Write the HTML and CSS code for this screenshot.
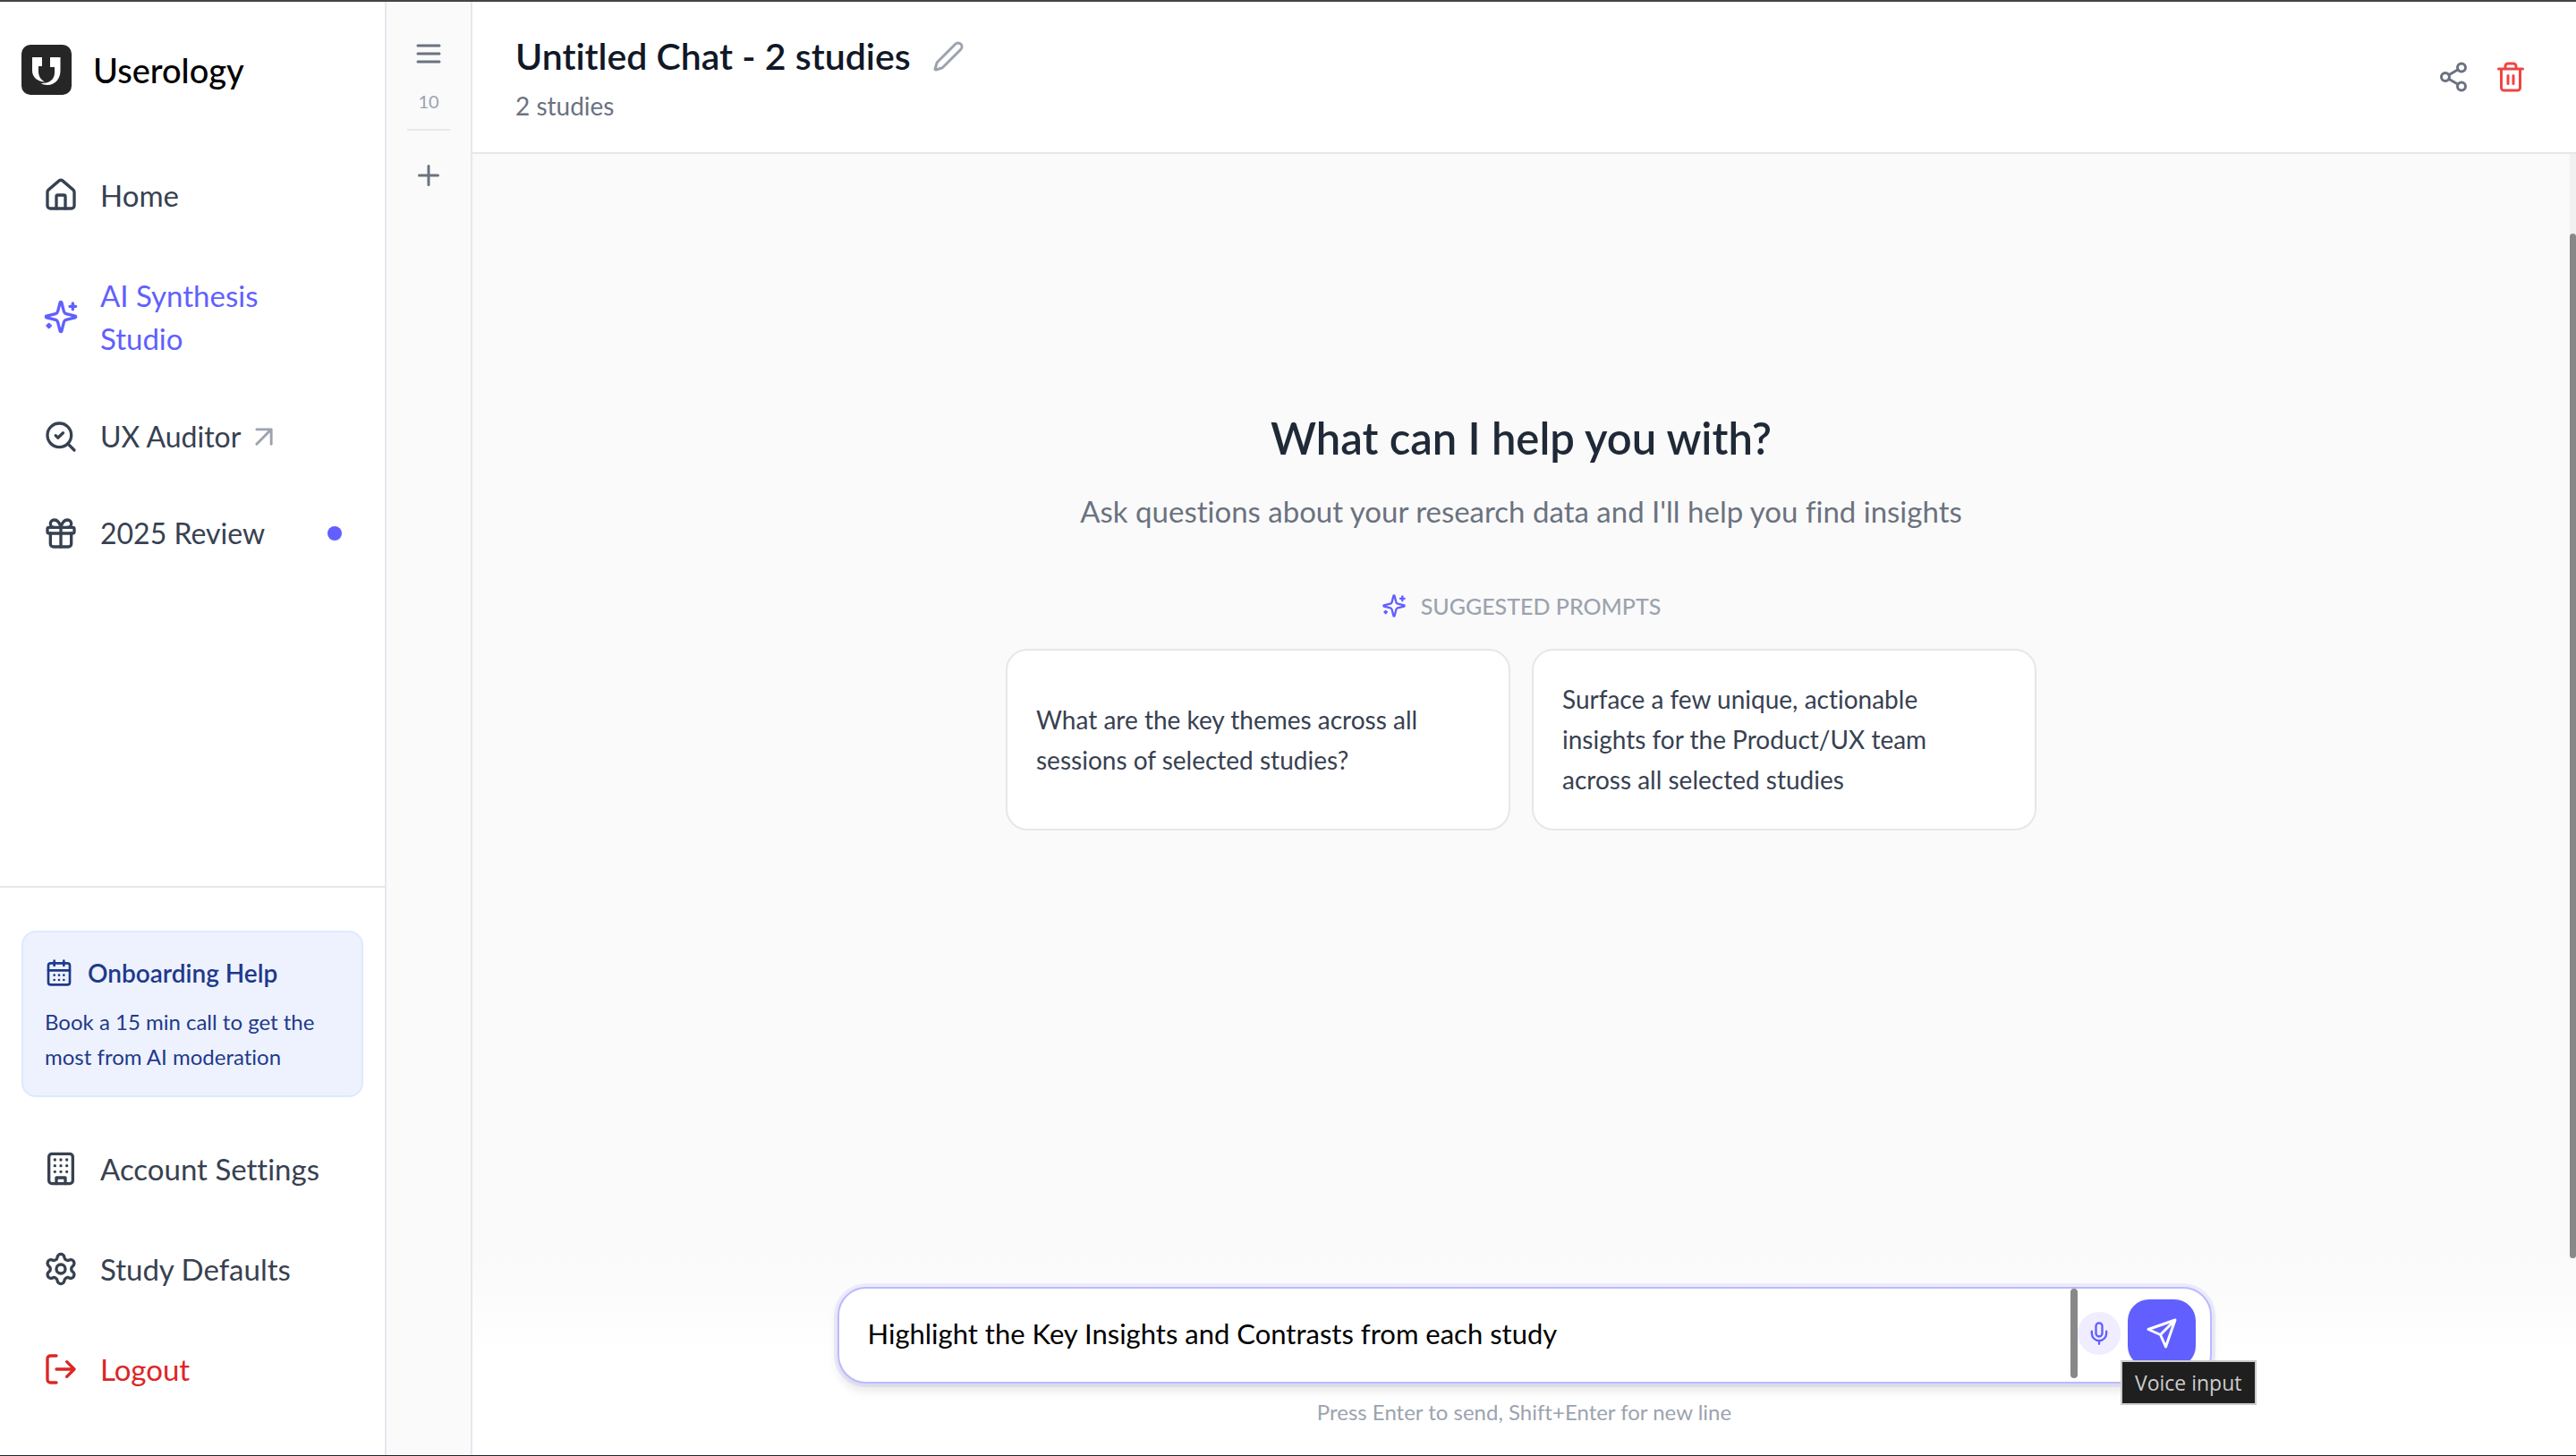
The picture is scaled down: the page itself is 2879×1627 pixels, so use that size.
FILE: index.html
```html
<!DOCTYPE html>
<html lang="en">
<head>
    <meta charset="UTF-8">
    <meta name="viewport" content="width=device-width, initial-scale=1.0">
    <title>Userology</title>
    <link rel="stylesheet" href="styles.css">
</head>
<body>
    <div class="app">
        <aside class="sidebar">
            <a href="#" class="brand">
                <svg class="logo" viewBox="0 0 56 56">
                    <rect width="56" height="56" rx="10" fill="#262626"/>
                    <path fill="#fff" d="M12 14h11v10h-4v6c0 5 2.5 9 7 11.500C18 41 12 36.500 12 29z"/>
                    <path fill="#fff" d="M32 14h11.500v15c0 9-6 16-14.500 16-3 0-5.500-.8-7.500-2C31 43.500 37 39 37 31v-6h-5z"/>
                </svg>
                <span>Userology</span>
            </a>
            <nav class="menu">
                <a href="#" class="item">
                    <svg class="icon" viewBox="0 0 24 24"><path d="M15 21v-8a1 1 0 0 0-1-1h-4a1 1 0 0 0-1 1v8"/><path d="M3 10a2 2 0 0 1 .709-1.528l7-5.999a2 2 0 0 1 2.582 0l7 5.999A2 2 0 0 1 21 10v9a2 2 0 0 1-2 2H5a2 2 0 0 1-2-2z"/></svg>
                    <span>Home</span>
                </a>
                <a href="#" class="item active">
                    <svg class="icon" viewBox="0 0 24 24"><path d="M9.937 15.5A2 2 0 0 0 8.5 14.063l-6.135-1.582a.5.5 0 0 1 0-.962L8.5 9.936A2 2 0 0 0 9.937 8.5l1.582-6.135a.5.5 0 0 1 .963 0L14.063 8.5A2 2 0 0 0 15.5 9.937l6.135 1.581a.5.5 0 0 1 0 .964L15.5 14.063a2 2 0 0 0-1.437 1.437l-1.582 6.135a.5.5 0 0 1-.963 0z"/><path d="M20 3v4M22 5h-4M4 17v2M5 18H3"/></svg>
                    <span>AI Synthesis Studio</span>
                </a>
                <a href="#" class="item short">
                    <svg class="icon" viewBox="0 0 24 24"><circle cx="11" cy="11" r="8"/><path d="m21 21-4.3-4.3"/><path d="m8.5 11.2 1.5 1.5 3.5-3.2"/></svg>
                    <span>UX Auditor</span>
                    <svg class="icon external" viewBox="0 0 24 24"><path d="m5 19 14-14m0 0H5m14 0v14"/></svg>
                </a>
                <a href="#" class="item short">
                    <svg class="icon" viewBox="0 0 24 24"><rect x="3" y="8" width="18" height="4" rx="1"/><path d="M12 8v13"/><path d="M19 12v7a2 2 0 0 1-2 2H7a2 2 0 0 1-2-2v-7"/><path d="M7.5 8a2.5 2.5 0 0 1 0-5A4.8 8 0 0 1 12 8a4.8 8 0 0 1 4.5-5 2.5 2.5 0 0 1 0 5"/></svg>
                    <span>2025 Review</span>
                    <i class="dot"></i>
                </a>
            </nav>
            <div class="bottom">
                <a href="#" class="help">
                    <span class="help-title">
                        <svg class="icon" viewBox="0 0 24 24"><path d="M8 2v4M16 2v4"/><rect x="3" y="4" width="18" height="18" rx="2"/><path d="M3 10h18M8 14h.01M12 14h.01M16 14h.01M8 18h.01M12 18h.01M16 18h.01"/></svg>
                        Onboarding Help
                    </span>
                    <span class="help-text">Book a 15 min call to get the most from AI moderation</span>
                </a>
                <a href="#" class="item">
                    <svg class="icon" viewBox="0 0 24 24"><rect x="4" y="2" width="16" height="20" rx="2"/><path d="M9 22v-4h6v4M8 6h.01M12 6h.01M16 6h.01M8 10h.01M12 10h.01M16 10h.01M8 14h.01M12 14h.01M16 14h.01"/></svg>
                    <span>Account Settings</span>
                </a>
                <a href="#" class="item">
                    <svg class="icon" viewBox="0 0 24 24"><path d="M9.671 4.136a2.34 2.34 0 0 1 4.659 0 2.34 2.34 0 0 0 3.319 1.915 2.34 2.34 0 0 1 2.33 4.033 2.34 2.34 0 0 0 0 3.831 2.34 2.34 0 0 1-2.33 4.033 2.34 2.34 0 0 0-3.319 1.915 2.34 2.34 0 0 1-4.659 0 2.34 2.34 0 0 0-3.32-1.915 2.34 2.34 0 0 1-2.33-4.033 2.34 2.34 0 0 0 0-3.831A2.34 2.34 0 0 1 6.35 6.051a2.34 2.34 0 0 0 3.319-1.915"/><circle cx="12" cy="12" r="3"/></svg>
                    <span>Study Defaults</span>
                </a>
                <a href="#" class="item logout">
                    <svg class="icon" viewBox="0 0 24 24"><path d="m16 17 5-5-5-5M21 12H9M9 21H5a2 2 0 0 1-2-2V5a2 2 0 0 1 2-2h4"/></svg>
                    <span>Logout</span>
                </a>
            </div>
        </aside>

        <div class="rail">
            <button class="rail-btn" aria-label="Open chats">
                <svg class="icon small" viewBox="0 0 24 24"><path d="M4 6h16M4 12h16M4 18h16"/></svg>
            </button>
            <span class="count">10</span>
            <hr>
            <button class="rail-btn" aria-label="New chat">
                <svg class="icon small" viewBox="0 0 24 24"><path d="M5 12h14M12 5v14"/></svg>
            </button>
        </div>

        <main class="main">
            <header class="header">
                <div>
                    <div class="title-row">
                        <h1>Untitled Chat - 2 studies</h1>
                        <button class="edit" aria-label="Rename">
                            <svg class="icon small" viewBox="0 0 24 24"><path d="M21.174 6.812a1 1 0 0 0-3.986-3.987L3.842 16.174a2 2 0 0 0-.5.83l-1.321 4.352a.5.5 0 0 0 .623.622l4.353-1.32a2 2 0 0 0 .83-.497z"/></svg>
                        </button>
                    </div>
                    <p class="subtitle">2 studies</p>
                </div>
                <div class="actions">
                    <button aria-label="Share">
                        <svg class="icon small" viewBox="0 0 24 24"><circle cx="18" cy="5" r="3"/><circle cx="6" cy="12" r="3"/><circle cx="18" cy="19" r="3"/><path d="m8.59 13.51 6.83 3.98M15.41 6.51l-6.82 3.98"/></svg>
                    </button>
                    <button class="delete" aria-label="Delete">
                        <svg class="icon small" viewBox="0 0 24 24"><path d="M3 6h18M19 6v14a2 2 0 0 1-2 2H7a2 2 0 0 1-2-2V6M8 6V4a2 2 0 0 1 2-2h4a2 2 0 0 1 2 2v2M10 11v6M14 11v6"/></svg>
                    </button>
                </div>
            </header>

            <div class="content">
                <section class="welcome">
                    <h2>What can I help you with?</h2>
                    <p class="lead">Ask questions about your research data and I'll help you find insights</p>
                    <div class="suggested">
                        <svg class="icon" viewBox="0 0 24 24"><path d="M9.937 15.5A2 2 0 0 0 8.5 14.063l-6.135-1.582a.5.5 0 0 1 0-.962L8.5 9.936A2 2 0 0 0 9.937 8.5l1.582-6.135a.5.5 0 0 1 .963 0L14.063 8.5A2 2 0 0 0 15.5 9.937l6.135 1.581a.5.5 0 0 1 0 .964L15.5 14.063a2 2 0 0 0-1.437 1.437l-1.582 6.135a.5.5 0 0 1-.963 0z"/><path d="M20 3v4M22 5h-4M4 17v2M5 18H3"/></svg>
                        <span>SUGGESTED PROMPTS</span>
                    </div>
                    <div class="prompts">
                        <button>What are the key themes across all sessions of selected studies?</button>
                        <button>Surface a few unique, actionable insights for the Product/UX team across all selected studies</button>
                    </div>
                </section>
                <div class="track"><div class="thumb"></div></div>
            </div>

            <footer class="composer">
                <form class="input-box">
                    <textarea rows="1" aria-label="Message">Highlight the Key Insights and Contrasts from each study</textarea>
                    <div class="thumb"></div>
                    <button type="button" class="mic" aria-label="Voice input">
                        <svg class="icon" viewBox="0 0 24 24"><path d="M12 19v3M19 10v2a7 7 0 0 1-14 0v-2"/><rect x="9" y="2" width="6" height="13" rx="3"/></svg>
                    </button>
                    <button type="button" class="send" aria-label="Send">
                        <svg class="icon small" viewBox="0 0 24 24"><path d="m22 2-7 20-4-9-9-4ZM22 2 11 13"/></svg>
                    </button>
                    <div class="tooltip" role="tooltip">Voice input</div>
                </form>
                <p class="hint">Press Enter to send, Shift+Enter for new line</p>
            </footer>
        </main>
    </div>
</body>
</html>
```
FILE: styles.css
```css
*{
    box-sizing: border-box;
}
body{
    margin: 0;
    font-family: Lato, "Liberation Sans", sans-serif;
    font-size: 33px;
    font-variant-ligatures: none;
    color: #374151;
}
h1, h2, p{
    margin: 0;
}
a{
    color: inherit;
    text-decoration: none;
}
button{
    padding: 0;
    border: 0;
    background: none;
    font: inherit;
    font-variant-ligatures: none;
    color: inherit;
    cursor: pointer;
}
.app{
    display: flex;
    height: 100vh;
    border-top: 2px solid #444;
    border-bottom: 1px solid #1f2430;
}
.icon{
    display: block;
    flex: none;
    width: 40px;
    height: 40px;
    fill: none;
    stroke: currentColor;
    stroke-width: 2;
    stroke-linecap: round;
    stroke-linejoin: round;
}
.icon.small{
    width: 36px;
    height: 36px;
}

/* sidebar */
.sidebar{
    display: flex;
    flex-direction: column;
    flex: none;
    width: 432px;
    border-right: 2px solid #e5e7eb;
    background-color: #fff;
}
.brand{
    display: flex;
    align-items: center;
    gap: 24px;
    padding: 48px 24px;
    font-size: 38px;
    font-weight: 500;
    line-height: 56px;
    color: #000;
}
.logo{
    width: 56px;
    height: 56px;
}
.menu{
    display: flex;
    flex-direction: column;
    gap: 16px;
    padding: 16px 24px;
}
.item{
    display: flex;
    align-items: center;
    gap: 24px;
    padding: 24px;
    line-height: 48px;
}
.item.short{
    font-size: 32px;
    line-height: 44px;
}
.item.active{
    color: #615fff;
}
.item.logout{
    color: #dc2626;
}
.item .external{
    width: 28px;
    height: 28px;
    margin-left: -12px;
    stroke-width: 2.5;
    color: #9ca3af;
}
.dot{
    width: 16px;
    height: 16px;
    margin-left: auto;
    border-radius: 50%;
    background-color: #615fff;
}
.bottom{
    display: flex;
    flex-direction: column;
    gap: 16px;
    margin-top: auto;
    padding: 48px 24px;
    border-top: 2px solid #e5e7eb;
}
.help{
    display: flex;
    flex-direction: column;
    gap: 14px;
    margin-bottom: 16px;
    padding: 24px;
    border: 2px solid #dbeafe;
    border-radius: 16px;
    background-color: #eef2ff;
    color: #1e3a8a;
}
.help-title{
    display: flex;
    align-items: center;
    gap: 16px;
    font-size: 28px;
    font-weight: 600;
    line-height: 42px;
}
.help-title .icon{
    width: 32px;
    height: 32px;
}
.help-text{
    font-size: 24px;
    line-height: 39px;
}

/* collapsed chat list */
.rail{
    display: flex;
    flex-direction: column;
    align-items: center;
    flex: none;
    width: 96px;
    padding-top: 28px;
    border-right: 2px solid #e5e7eb;
    background-color: #fafafa;
    color: #6b7280;
}
.rail-btn{
    padding: 12px;
}
.count{
    margin-top: 8px;
    font-size: 20px;
    line-height: 30px;
    color: #9ca3af;
}
.rail hr{
    width: 48px;
    margin: 16px 0 20px;
    border: 0;
    border-top: 2px solid #e5e7eb;
}

/* chat */
.main{
    display: flex;
    flex-direction: column;
    flex: 1;
    min-width: 0;
    background-color: #fafafa;
}
.header{
    display: flex;
    align-items: center;
    justify-content: space-between;
    padding: 31px 43px 31px 48px;
    border-bottom: 2px solid #e5e7eb;
    background-color: #fff;
}
.title-row{
    display: flex;
    align-items: center;
    gap: 24px;
}
.title-row h1{
    font-size: 41px;
    font-weight: 600;
    line-height: 60px;
    color: #111827;
}
.edit{
    color: #9ca3af;
}
.subtitle{
    margin-top: 4px;
    font-size: 28px;
    line-height: 42px;
    color: #6b7280;
}
.actions{
    display: flex;
    gap: 4px;
    color: #6b7280;
}
.actions button{
    padding: 12px;
}
.actions .delete{
    color: #ef4444;
}
.content{
    display: flex;
    flex: 1;
    min-height: 0;
}
.welcome{
    display: flex;
    flex-direction: column;
    align-items: center;
    flex: 1;
    padding-top: 285px;
}
.welcome h2{
    font-size: 49px;
    font-weight: 600;
    line-height: 64px;
    color: #1f2937;
}
.lead{
    margin-top: 24px;
    line-height: 52px;
    color: #6b7280;
}
.suggested{
    display: flex;
    align-items: center;
    gap: 16px;
    margin-top: 62px;
    font-size: 25px;
    font-weight: 500;
    line-height: 36px;
    color: #9ca3af;
}
.suggested .icon{
    width: 28px;
    height: 28px;
    color: #615fff;
}
.prompts{
    display: grid;
    grid-template-columns: 1fr 1fr;
    gap: 24px;
    width: 100%;
    max-width: 1152px;
    margin-top: 30px;
}
.prompts button{
    padding: 32px 48px 32px 32px;
    border: 2px solid #e5e7eb;
    border-radius: 24px;
    background-color: #fff;
    font-size: 28px;
    line-height: 45px;
    text-align: left;
}
.track{
    width: 7px;
    padding-top: 89px;
    background-color: #f1f1f1;
}
.thumb{
    height: 100%;
    border-radius: 4px;
    background-color: #888;
}

/* message box */
.composer{
    padding: 32px 48px 30px;
    background-image: linear-gradient(#fafafa, #fff 50%);
}
.input-box{
    position: relative;
    display: flex;
    align-items: center;
    max-width: 1536px;
    height: 108px;
    margin: 0 auto;
    padding: 0 16px 4px 0;
    border: 2px solid #bdb9ff;
    border-radius: 32px;
    background-color: #fff;
    box-shadow: 0 0 0 4px rgba(97, 95, 255, .1), 0 8px 12px rgba(0, 0, 0, .1);
}
.input-box textarea{
    flex: 1;
    height: 48px;
    padding: 0 32px;
    border: 0;
    outline: 0;
    background: none;
    font: inherit;
    font-size: 31px;
    font-variant-ligatures: none;
    line-height: 48px;
    color: #000;
    resize: none;
    overflow: hidden;
}
.input-box .thumb{
    width: 8px;
}
.mic{
    display: grid;
    place-items: center;
    width: 48px;
    height: 48px;
    margin-right: 8px;
    border-radius: 50%;
    background-color: #efedff;
    color: #615fff;
}
.mic .icon{
    width: 28px;
    height: 28px;
}
.send{
    display: grid;
    place-items: center;
    width: 76px;
    height: 76px;
    border-radius: 24px;
    background-color: #615fff;
    color: #fff;
}
.tooltip{
    position: absolute;
    top: 80px;
    right: -52px;
    padding: 5px 14px;
    border: 2px solid #ccc;
    background-color: #1f1f1f;
    font-family: "Open Sans", "Noto Sans", sans-serif;
    font-size: 23px;
    line-height: 36px;
    color: #ccc;
}
.hint{
    margin-top: 14px;
    font-size: 24px;
    line-height: 36px;
    text-align: center;
    color: #9ca3af;
}
```
